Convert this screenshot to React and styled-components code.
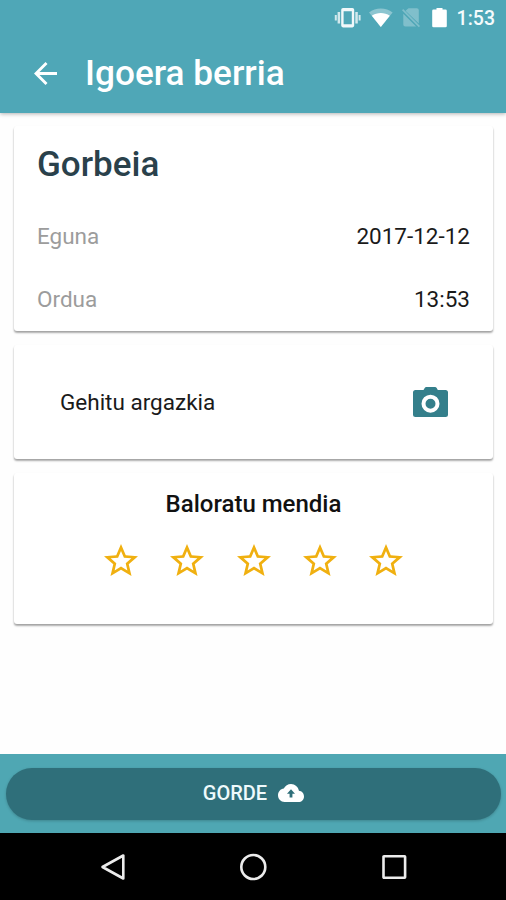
import React,{useState} from 'react';
import styled,{createGlobalStyle} from 'styled-components';

const STAR_OUTLINE = "M22 9.24l-7.19-.62L12 2 9.19 8.63 2 9.24l5.46 4.73L5.82 21 12 17.27 18.18 21l-1.63-7.03L22 9.24zM12 15.4l-3.76 2.27 1-4.28-3.32-2.88 4.38-.38L12 6.1l1.71 4.04 4.38.38-3.32 2.88 1 4.28L12 15.4z";
const STAR_FULL = "M12 17.27L18.18 21l-1.64-7.03L22 9.24l-7.19-.61L12 2 9.19 8.63 2 9.24l5.46 4.73L5.82 21z";

function StatusIcons() {
    return (
        <svg width="114" height="22" viewBox="0 0 114 22" fill="#fff">
            {/* vibrate */}
            <path d="M9 1h9.400a1.800 1.800 0 0 1 1.800 1.800v15.800a1.800 1.800 0 0 1-1.800 1.800H9a1.800 1.800 0 0 1-1.800-1.800V2.800A1.800 1.800 0 0 1 9 1zm.6 3.200v13h8.200v-13z" fillRule="evenodd" opacity="0.92" />
            <path d="M3.600 5h2.500v11.500H3.600zM21.300 5h2.500v11.500h-2.500zM.8 8h2v5.500h-2zM24.600 8h2v5.500h-2z" opacity="0.75" />
            {/* wifi */}
            <path d="M35 5.500C41.500 .3 52 .3 58.600 5.500L46.800 20z" opacity="0.35" />
            <path d="M37.800 8.700C43 5.200 50.600 5.200 55.800 8.700L46.800 20z" />
            {/* no sim */}
            <path d="M74.500 1.200h8.300a2 2 0 0 1 2 2v13.200L71.500 3.800zM69.300 6.700l12.800 12.800H71.300a2 2 0 0 1-2-2z" opacity="0.28" />
            <path d="M68 3.200l1.200-1.200 16.800 17-1.200 1.200z" opacity="0.28" />
            {/* battery */}
            <path d="M102.500 1h6v1.400h3a1.300 1.300 0 0 1 1.300 1.300v15.300a1.300 1.300 0 0 1-1.300 1.300h-12a1.300 1.300 0 0 1-1.300-1.300V3.700a1.300 1.300 0 0 1 1.300-1.300h3z" />
        </svg>
    );
}

function App() {
    const [rating,setRating] = useState(0);
    const renderStars = ()=>{
        return [1,2,3,4,5].map((value)=>(
            <StarButton key={value} aria-label={`${value}`} onClick={()=>setRating(value)}>
                <svg width="34" height="32" viewBox="2 2 20 19" preserveAspectRatio="none" fill="#f0b010">
                    <path d={value <= rating ? STAR_FULL : STAR_OUTLINE} />
                </svg>
            </StarButton>
        ));
    };
    return (
        <>
            <GlobalStyle />
            <Screen>
                <Header>
                    <StatusBar>
                        <StatusIcons />
                        <Clock>1:53</Clock>
                    </StatusBar>
                    <Toolbar>
                        <BackButton aria-label="Atzera">
                            <svg width="23" height="23" viewBox="4 4 16 16" fill="#fff">
                                <path d="M20 11H7.830l5.590-5.590L12 4l-8 8 8 8 1.410-1.410L7.830 13H20v-2z" />
                            </svg>
                        </BackButton>
                        <Title>Igoera berria</Title>
                    </Toolbar>
                </Header>
                <Content>
                    <DetailsCard>
                        <Mountain>Gorbeia</Mountain>
                        <Row>
                            <Label>Eguna</Label>
                            <Value>2017-12-12</Value>
                        </Row>
                        <Row>
                            <Label>Ordua</Label>
                            <Value>13:53</Value>
                        </Row>
                    </DetailsCard>
                    <PhotoCard>
                        <Value>Gehitu argazkia</Value>
                        <svg width="35" height="30" viewBox="0 0 35 30">
                            <path d="M13.500 0h8.500a2 2 0 0 1 1.700 1L24.800 3H32.500A2.500 2.500 0 0 1 35 5.500v22a2.500 2.500 0 0 1-2.500 2.500h-30A2.500 2.500 0 0 1 0 27.500v-22A2.500 2.500 0 0 1 2.500 3H10.500l1.200-2a2 2 0 0 1 1.800-1z" fill="#347f8b" />
                            <circle cx="17.500" cy="16.700" r="7" fill="none" stroke="#fff" strokeWidth="4" />
                        </svg>
                    </PhotoCard>
                    <RatingCard>
                        <RatingTitle>Baloratu mendia</RatingTitle>
                        <Stars>{renderStars()}</Stars>
                    </RatingCard>
                </Content>
                <Footer>
                    <SaveButton>
                        GORDE
                        <svg width="26" height="18" viewBox="0 4 24 16" preserveAspectRatio="none" fill="#fff">
                            <path d="M19.350 10.040C18.670 6.590 15.640 4 12 4 9.110 4 6.600 5.640 5.350 8.040 2.340 8.360 0 10.910 0 14c0 3.310 2.690 6 6 6h13c2.760 0 5-2.240 5-5 0-2.640-2.050-4.780-4.650-4.960zM13.300 12.700v3.400h-2.600v-3.400H8.300l3.700-4 3.700 4z" />
                        </svg>
                    </SaveButton>
                </Footer>
                <NavBar>
                    <svg width="28" height="28" viewBox="0 0 28 28">
                        <path d="M24.300 2.500v23L3.500 14z" />
                    </svg>
                    <svg width="28" height="28" viewBox="0 0 28 28">
                        <circle cx="14.300" cy="14" r="12" />
                    </svg>
                    <svg width="28" height="28" viewBox="0 0 28 28">
                        <rect x="3.500" y="3.200" width="21.600" height="21.600" rx="0.5" />
                    </svg>
                </NavBar>
            </Screen>
        </>
    );
}

const GlobalStyle = createGlobalStyle`
    * {
        box-sizing:border-box;
    }
    body {
        margin:0;
        font-family:Roboto, sans-serif;
        background:#fefefe;
    }
    h1,h2,h3 {
        margin:0;
        font-weight:500;
    }
    button {
        border:none;
        background:none;
        padding:0;
        font-family:inherit;
    }
    svg {
        display:block;
        flex-shrink:0;
    }
`;
const Screen = styled.div`
    display:flex;
    flex-direction:column;
    width:506px;
    height:900px;
    overflow:hidden;
`;
const Header = styled.header`
    height:113px;
    flex-shrink:0;
    background:#4fa7b7;
    box-shadow:0 1px 4px rgba(0,0,0,0.3);
`;
const StatusBar = styled.div`
    display:flex;
    align-items:center;
    justify-content:flex-end;
    gap:9px;
    height:34px;
    padding:2px 11px 0 0;
`;
const Clock = styled.span`
    font-size:19.500px;
    font-weight:500;
    color:#f4fbfc;
`;
const Toolbar = styled.div`
    display:flex;
    align-items:center;
    height:79px;
    padding-left:34px;
`;
const BackButton = styled.button`
    margin-right:28px;
`;
const Title = styled.h1`
    padding-bottom:1px;
    font-size:35.200px;
    line-height:40px;
    color:#fff;
`;
const Content = styled.main`
    display:flex;
    flex-direction:column;
    gap:14px;
    flex:1;
    padding:13px 13px 0 14px;
`;
const Card = styled.section`
    background:#fff;
    border-radius:3px;
    box-shadow:0 2px 2px rgba(0,0,0,0.3), 0 1px 2px rgba(0,0,0,0.1);
`;
const DetailsCard = styled(Card)`
    height:205px;
    padding:19px 23px 0;
`;
const Mountain = styled.h2`
    margin-bottom:19px;
    font-size:35px;
    line-height:40px;
    color:#2a414b;
`;
const Row = styled.div`
    display:flex;
    align-items:center;
    justify-content:space-between;
    height:63px;
`;
const Label = styled.span`
    font-size:22.500px;
    color:#9c9c9c;
`;
const Value = styled.span`
    font-size:22.500px;
    color:#1a1a1a;
`;
const PhotoCard = styled(Card)`
    display:flex;
    align-items:center;
    justify-content:space-between;
    height:114px;
    padding:0 45px 0 46px;
`;
const RatingCard = styled(Card)`
    height:151px;
    padding-top:17px;
`;
const RatingTitle = styled.h3`
    font-size:24px;
    line-height:28px;
    text-align:center;
    color:#111;
`;
const Stars = styled.div`
    display:flex;
    justify-content:center;
    gap:32.200px;
    margin-top:26px;
`;
const StarButton = styled.button`
    display:block;
    cursor:pointer;
`;
const Footer = styled.footer`
    height:79px;
    flex-shrink:0;
    padding:14px 5px 0 6px;
    background:#4fa7b3;
`;
const SaveButton = styled.button`
    display:flex;
    align-items:center;
    justify-content:center;
    gap:11px;
    width:100%;
    height:52px;
    padding-bottom:2px;
    border-radius:26px;
    background:#2f6f7a;
    font-size:20px;
    font-weight:500;
    color:#eefafc;
    box-shadow:0 1px 3px rgba(0,0,0,0.2);
`;
const NavBar = styled.nav`
    display:flex;
    align-items:center;
    justify-content:center;
    gap:112.500px;
    height:67px;
    flex-shrink:0;
    background:#000;
    svg {
        fill:none;
        stroke:#ececec;
        stroke-width:2.600px;
        stroke-linejoin:round;
    }
`;

export default App;
